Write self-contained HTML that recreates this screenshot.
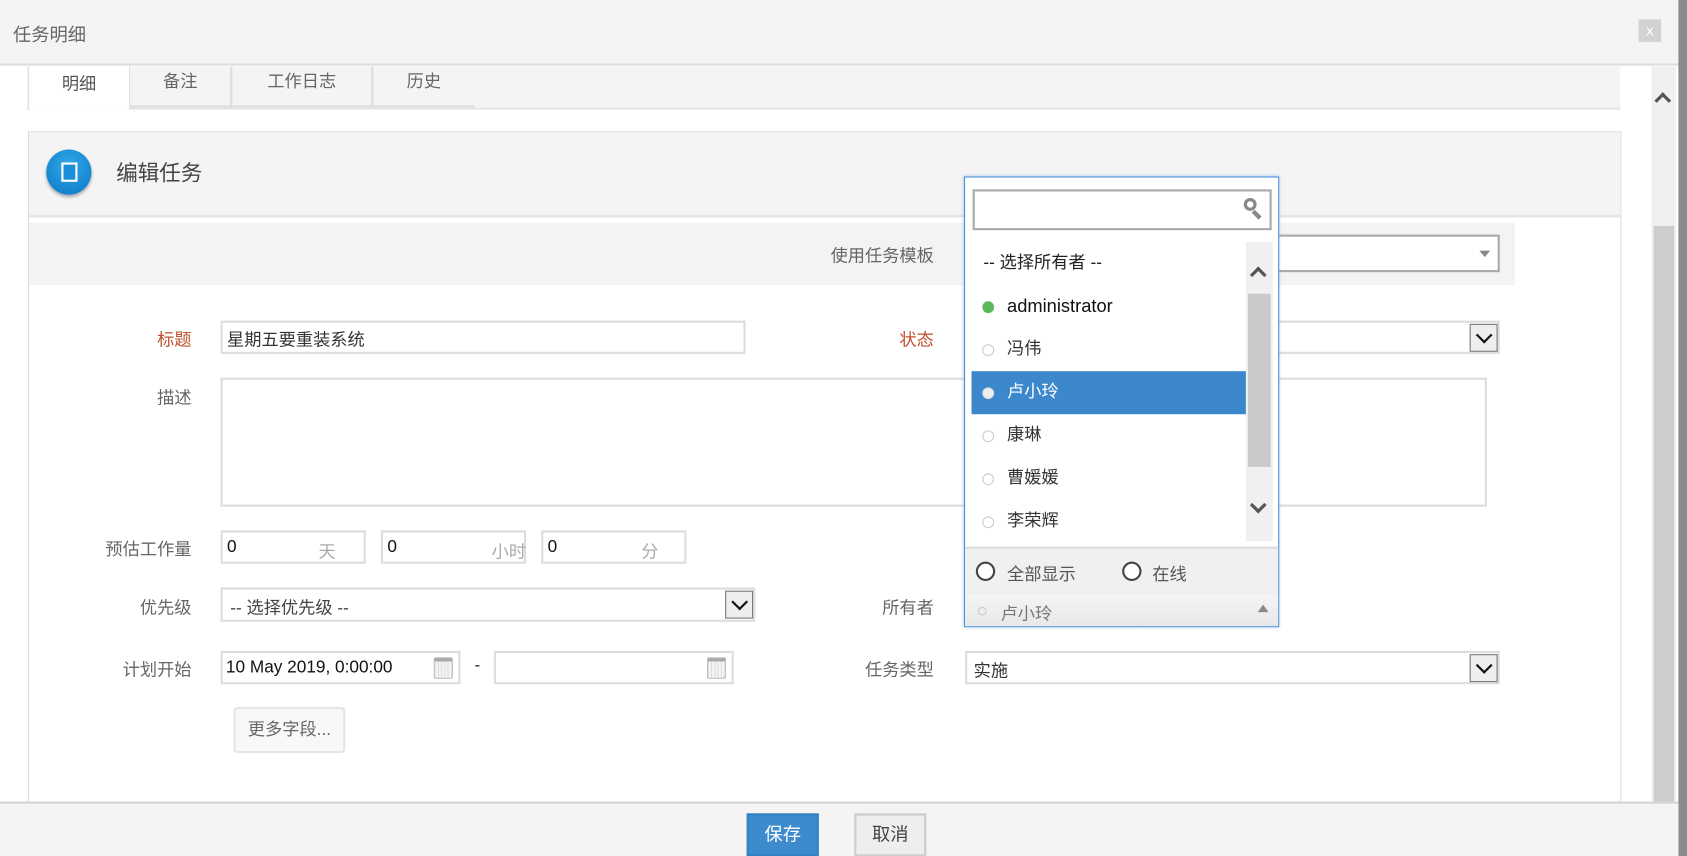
<!DOCTYPE html>
<html><head><meta charset="utf-8"><style>
*{box-sizing:border-box;margin:0;padding:0}
html,body{width:1687px;height:856px;overflow:hidden;background:#fff}
#w{position:absolute;left:0;top:0;width:1568px;height:796px;transform:scale(1.07589);transform-origin:0 0;font-family:"Liberation Sans","Noto Sans CJK SC",sans-serif;font-size:16px;color:#555;white-space:nowrap}
.a{position:absolute}
.lbl{position:absolute;text-align:right;width:160px;color:#666;font-size:16px}
.red{color:#c0502f}
.inp{position:absolute;background:#fff;border:2px solid #ddd}
.selb{position:absolute;width:26px;height:26px;top:1px;right:0;border:1px solid #777;background:#eee}
.selb:after{content:"";position:absolute;left:7px;top:4px;width:9px;height:9px;border-right:2.5px solid #111;border-bottom:2.5px solid #111;transform:rotate(45deg)}
.cal{position:absolute;width:18px;height:20px;border:1px solid #bbb;background:repeating-linear-gradient(90deg,#ddd 0 1px,#f4f4f4 1px 3px);border-top:4px solid #aaa;border-radius:2px}
.it{position:absolute;left:6px;width:255px;height:40px;line-height:40px;padding-left:39px;font-size:16px;color:#333}
.dot{position:absolute;left:10px;top:15px;width:11px;height:11px;border-radius:50%;border:1.5px solid #ccc;background:#fff}
</style></head><body>
<div id="w">
<div class="a" style="left:0;top:0;width:1560px;height:61px;background:#f4f4f4;border-bottom:2px solid #ddd"></div>
<div class="a" style="left:12px;top:18px;font-size:17px;color:#666">任务明细</div>
<div class="a" style="left:1523px;top:18px;width:21px;height:21px;background:#d2d2d2;color:#fff;font-size:14px;text-align:center;line-height:20px">x</div>
<div class="a" style="left:1560px;top:0;width:8px;height:796px;background:#8a8a8a"></div>
<div class="a" style="left:1535px;top:62px;width:23px;height:684px;background:#f0f0f0"></div>
<div class="a" style="left:1537px;top:210px;width:19px;height:536px;background:#cdcdcd"></div>
<div class="a" style="left:1540px;top:88px;width:11px;height:11px;border-left:3px solid #555;border-top:3px solid #555;transform:rotate(45deg)"></div>
<div class="a" style="left:25px;top:62px;width:1481px;height:40px;background:#f4f4f4;border-bottom:2px solid #e6e6e6"></div>
<div class="a" style="left:26px;top:62px;width:95px;height:40px;background:#fff;border:1px solid #ddd;border-top:0;border-bottom:0;text-align:center;line-height:32px;padding-top:1px;color:#555">明细</div>
<div class="a" style="left:121px;top:62px;width:95px;height:38px;border-right:2px solid #ddd;border-bottom:2px solid #ddd;text-align:center;line-height:30px;color:#666">备注</div>
<div class="a" style="left:216px;top:62px;width:131px;height:38px;border-right:2px solid #ddd;border-bottom:2px solid #ddd;text-align:center;line-height:30px;color:#666">工作日志</div>
<div class="a" style="left:347px;top:62px;width:94px;height:38px;border-bottom:2px solid #ddd;text-align:center;line-height:30px;color:#666">历史</div>
<div class="a" style="left:26px;top:122px;width:1481px;height:625px;border:1px solid #ddd;border-bottom:0"></div>
<div class="a" style="left:27px;top:123px;width:1479px;height:79px;background:#f4f4f4;border-bottom:2px solid #e3e3e3"></div>
<div class="a" style="left:43px;top:139px;width:42px;height:42px;border-radius:50%;background:radial-gradient(circle at 50% 35%,#33a9ea,#0a76c4);box-shadow:0 2px 3px rgba(0,0,0,.35)"></div>
<div class="a" style="left:57px;top:151px;width:15px;height:18px;border:2.5px solid #fff;background:#1a8fd8"></div>
<div class="a" style="left:108px;top:145px;font-size:20px;color:#444">编辑任务</div>
<div class="a" style="left:27px;top:207px;width:1381px;height:58px;background:#f3f3f3"></div>
<div class="lbl" style="left:708px;top:224px">使用任务模板</div>
<div class="inp" style="left:1120px;top:218px;width:274px;height:35px;border-color:#aaa"></div>
<div class="a" style="left:1375px;top:233px;border-left:5px solid transparent;border-right:5px solid transparent;border-top:6px solid #888"></div>
<div class="lbl red" style="left:18px;top:302px">标题</div>
<div class="inp" style="left:205px;top:298px;width:488px;height:31px;padding:2px 4px;color:#333">星期五要重装系统</div>
<div class="lbl red" style="left:708px;top:302px">状态</div>
<div class="inp" style="left:897px;top:298px;width:497px;height:31px"><div class="selb"></div></div>
<div class="lbl" style="left:18px;top:356px">描述</div>
<div class="inp" style="left:205px;top:351px;width:1177px;height:120px"></div>
<div class="lbl" style="left:18px;top:497px">预估工作量</div>
<div class="inp" style="left:205px;top:493px;width:135px;height:31px;padding:5px 4px;color:#111">0<span class="a" style="left:89px;top:4px;color:#aaa">天</span></div>
<div class="inp" style="left:354px;top:493px;width:135px;height:31px;padding:5px 4px;color:#111">0<span class="a" style="left:101px;top:4px;color:#aaa">小时</span></div>
<div class="inp" style="left:503px;top:493px;width:135px;height:31px;padding:5px 4px;color:#111">0<span class="a" style="left:91px;top:4px;color:#aaa">分</span></div>
<div class="lbl" style="left:18px;top:551px">优先级</div>
<div class="inp" style="left:205px;top:546px;width:497px;height:32px;padding:3px 7px;color:#444">-- 选择优先级 --<div class="selb"></div></div>
<div class="lbl" style="left:708px;top:551px">所有者</div>
<div class="lbl" style="left:18px;top:609px">计划开始</div>
<div class="inp" style="left:205px;top:605px;width:223px;height:31px;padding:5px 3px;color:#111">10 May 2019, 0:00:00</div>
<div class="cal" style="left:403px;top:611px"></div>
<div class="a" style="left:441px;top:610px;color:#333">-</div>
<div class="inp" style="left:459px;top:605px;width:223px;height:31px"></div>
<div class="cal" style="left:657px;top:611px"></div>
<div class="lbl" style="left:708px;top:609px">任务类型</div>
<div class="inp" style="left:897px;top:605px;width:497px;height:31px;padding:3px 6px;color:#333">实施<div class="selb"></div></div>
<div class="a" style="left:217px;top:657px;width:104px;height:43px;background:#f8f8f8;border:2px solid #e5e5e5;border-radius:4px;text-align:center;line-height:39px;color:#666">更多字段...</div>
<div class="a" style="left:0;top:745px;width:1560px;height:51px;background:#f4f4f4;border-top:2px solid #d4d4d4"></div>
<div class="a" style="left:694px;top:756px;width:67px;height:40px;background:#3d8bcd;border:2px solid #3580c2;color:#fff;text-align:center;line-height:36px;font-size:17px">保存</div>
<div class="a" style="left:794px;top:756px;width:67px;height:40px;background:#eee;border:2px solid #ccc;color:#444;text-align:center;line-height:36px;font-size:17px">取消</div>
<div class="a" style="left:896px;top:164px;width:293px;height:419px;background:#fff;border:1.5px solid #4a8fd8;box-shadow:0 0 3px rgba(74,143,216,.5)"></div>
<div class="a" style="left:904px;top:176px;width:278px;height:38px;border:2px solid #aaa;background:#fff"></div>
<div class="a" style="left:1156px;top:184px;width:12px;height:12px;border:3px solid #888;border-radius:50%"></div>
<div class="a" style="left:1166px;top:195px;width:4px;height:9px;background:#888;transform:rotate(-45deg)"></div>
<div class="a" style="left:1158px;top:225px;width:25px;height:278px;background:#f0f0f0"></div>
<div class="a" style="left:1160px;top:273px;width:21px;height:161px;background:#cacaca"></div>
<div class="a" style="left:1164px;top:250px;width:11px;height:11px;border-left:3px solid #555;border-top:3px solid #555;transform:rotate(45deg)"></div>
<div class="a" style="left:1164px;top:464px;width:11px;height:11px;border-right:3px solid #555;border-bottom:3px solid #555;transform:rotate(45deg)"></div>
<div class="it" style="left:903px;top:225px;padding-left:11px;color:#222">-- 选择所有者 --</div>
<div class="it" style="left:897px;top:265px;color:#111;font-size:17px"><span class="dot" style="left:16px;background:#5cb85c;border-color:#5cb85c"></span>administrator</div>
<div class="it" style="left:897px;top:305px"><span class="dot" style="left:16px"></span>冯伟</div>
<div class="it" style="left:903px;top:345px;width:255px;background:#3d88cc;color:#fff;padding-left:33px"><span class="dot" style="left:10px;background:#eee;border-color:#ddd"></span>卢小玲</div>
<div class="it" style="left:897px;top:385px"><span class="dot" style="left:16px"></span>康琳</div>
<div class="it" style="left:897px;top:425px"><span class="dot" style="left:16px"></span>曹媛媛</div>
<div class="it" style="left:897px;top:465px"><span class="dot" style="left:16px"></span>李荣辉</div>
<div class="a" style="left:897px;top:508px;width:291px;height:45px;background:#f0f0f0;border-top:2px solid #ddd"></div>
<div class="a" style="left:907px;top:522px;width:18px;height:18px;border:2px solid #444;border-radius:50%;background:#fff"></div>
<div class="a" style="left:936px;top:520px;color:#555">全部显示</div>
<div class="a" style="left:1043px;top:522px;width:18px;height:18px;border:2px solid #444;border-radius:50%;background:#fff"></div>
<div class="a" style="left:1071px;top:520px;color:#555">在线</div>
<div class="a" style="left:897px;top:553px;width:291px;height:29px;background:linear-gradient(#f4f4f4,#e8e8e8)"></div>
<div class="a" style="left:909px;top:564px;width:8px;height:8px;border:1.5px solid #ccc;border-radius:50%"></div>
<div class="a" style="left:930px;top:557px;color:#777">卢小玲</div>
<div class="a" style="left:1169px;top:562px;border-left:5px solid transparent;border-right:5px solid transparent;border-bottom:7px solid #888"></div>
</div>
</body></html>
